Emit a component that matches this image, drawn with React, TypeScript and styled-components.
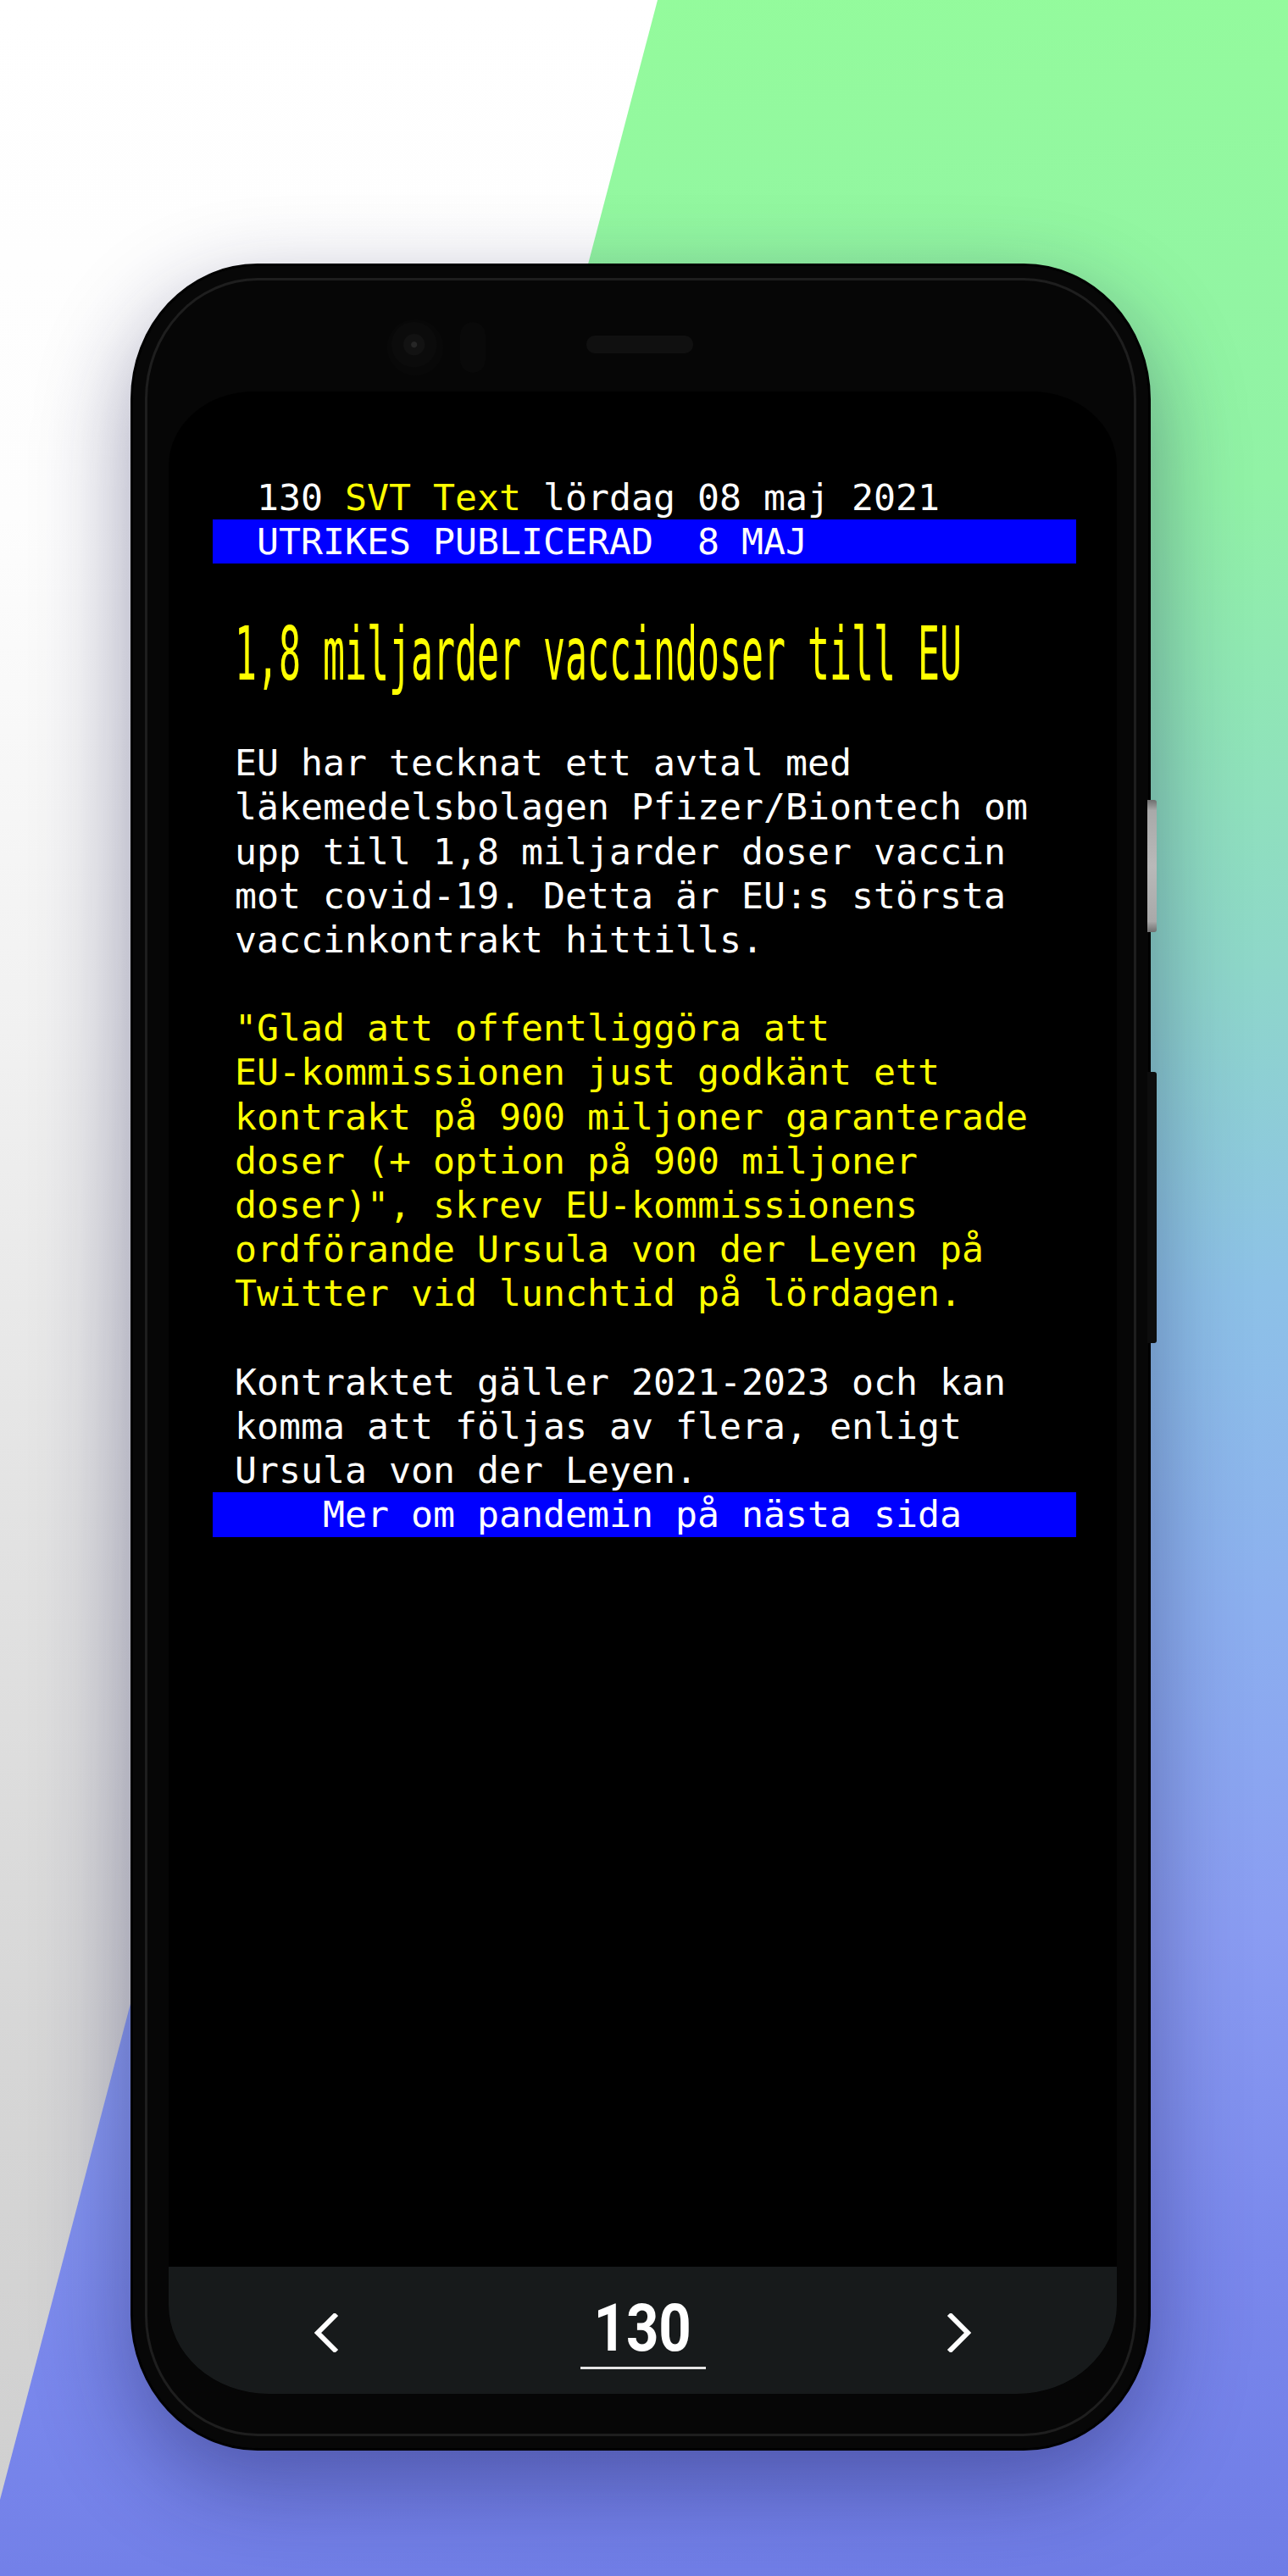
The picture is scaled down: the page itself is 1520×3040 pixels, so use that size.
import React from "react";
import styled, { createGlobalStyle } from "styled-components";

const GlobalStyle = createGlobalStyle`
  html, body {
    margin: 0;
    padding: 0;
  }
  body {
    width: 1520px;
    height: 3040px;
    overflow: hidden;
    background: #ffffff;
  }
`;

const Page = styled.div`
  position: relative;
  width: 1520px;
  height: 3040px;
  overflow: hidden;
  box-sizing: border-box;
  padding: 311px 0 0 154px;
  display: flex;
  align-items: flex-start;
  background: linear-gradient(
    175deg,
    #94fc9b 0%,
    #91f2a6 22%,
    #8ed7c9 40%,
    #8dc1e7 52%,
    #8cafef 64%,
    #8a9cf2 76%,
    #7a88ec 88%,
    #6f7ce6 100%
  );

  &::before {
    content: "";
    position: absolute;
    inset: 0;
    background: linear-gradient(
      180deg,
      #ffffff 0%,
      #fdfdfd 20%,
      #f1f1f1 40%,
      #e2e2e2 60%,
      #d6d6d6 80%,
      #cfcfcf 100%
    );
    clip-path: polygon(0 0, 776px 0, 0 2950px);
  }
`;

const Phone = styled.div`
  position: relative;
  z-index: 1;
  width: 1204px;
  height: 2581px;
  box-sizing: border-box;
  border: 3px solid #000;
  border-radius: 150px / 160px;
  background: #060606;
  box-shadow: inset 0 0 0 14px #070707, inset 0 0 0 17px #1e1e1e,
    0 40px 110px rgba(25, 25, 80, 0.42);
  display: flex;
  flex-direction: column;
  padding: 0 37px 64px 42px;
`;

const SideButton = styled.div<{ $top: number; $height: number; $light?: boolean }>`
  position: absolute;
  left: calc(100% - 1px);
  top: ${(p) => p.$top}px;
  width: 11px;
  height: ${(p) => p.$height}px;
  border-radius: 0 3px 3px 0;
  background: ${(p) =>
    p.$light
      ? "linear-gradient(180deg, #6e6e6e 0%, #a9a9a9 8%, #b9b9b9 50%, #a9a9a9 92%, #6e6e6e 100%)"
      : "#0d0d0d"};
`;

const TopBezel = styled.div`
  height: 148px;
  box-sizing: border-box;
  padding: 44px 0 0 258px;
  display: flex;
  align-items: center;
`;

const Camera = styled.div`
  width: 66px;
  height: 66px;
  border-radius: 50%;
  background: radial-gradient(
    circle at 48% 45%,
    #262626 0 3px,
    #121212 4px 12px,
    #0b0b0b 13px 26px,
    #080808 27px
  );
`;

const Sensor = styled.div`
  width: 30px;
  height: 60px;
  margin-left: 20px;
  border-radius: 15px;
  background: #090909;
`;

const Speaker = styled.div`
  width: 126px;
  height: 21px;
  margin-left: 119px;
  margin-bottom: 7px;
  border-radius: 10px;
  background: #101010;
`;

const Screen = styled.div`
  flex: 1;
  background: #000;
  border-radius: 100px 100px 118px 118px / 88px 88px 105px 105px;
  overflow: hidden;
  display: flex;
  flex-direction: column;
`;

const Teletext = styled.div`
  width: 1019px;
  margin: 99px 0 0 52px;
  font-family: "DejaVu Sans Mono", "Liberation Mono", monospace;
  font-size: 43.2px;
  line-height: 52.2px;
  color: #ffffff;
  white-space: pre;
`;

const Row = styled.div<{ $bar?: boolean; $yellow?: boolean }>`
  height: 52.2px;
  background: ${(p) => (p.$bar ? "#0000ff" : "transparent")};
  color: ${(p) => (p.$yellow ? "#ffff00" : "#ffffff")};
`;

const DoubleRow = styled.div`
  height: 104.4px;
  color: #ffff00;
`;

const DoubleText = styled.div`
  height: 52.2px;
  transform: translateY(2px) scaleY(2);
  transform-origin: 0 0;
`;

const Yellow = styled.span`
  color: #ffff00;
`;

const Spacer = styled.div`
  flex: 1;
`;

const NavBar = styled.nav`
  height: 150px;
  box-sizing: border-box;
  background: #171a1b;
  display: flex;
  align-items: center;
  justify-content: space-between;
  padding: 6px 171px 0;
`;

const PageNumber = styled.div`
  width: 148px;
  text-align: center;
  font-family: Roboto, "Liberation Sans", sans-serif;
  font-weight: 700;
  font-size: 78px;
  line-height: 76px;
  color: #ffffff;
  padding-bottom: 7px;
  border-bottom: 3px solid #e4e4e4;
`;

const Digits = styled.span`
  display: inline-block;
  transform: scaleX(0.86);
`;

const Chevron = ({ dir }: { dir: "left" | "right" }) => (
  <svg width="30" height="46" viewBox="0 0 30 46">
    <polyline
      points={dir === "left" ? "27,1 5,23 27,45" : "3,1 25,23 3,45"}
      fill="none"
      stroke="#ffffff"
      strokeWidth="6"
      strokeLinejoin="miter"
    />
  </svg>
);

const body1 = [
  " EU har tecknat ett avtal med",
  " läkemedelsbolagen Pfizer/Biontech om",
  " upp till 1,8 miljarder doser vaccin",
  " mot covid-19. Detta är EU:s största",
  " vaccinkontrakt hittills.",
];

const quote = [
  ' "Glad att offentliggöra att',
  " EU-kommissionen just godkänt ett",
  " kontrakt på 900 miljoner garanterade",
  " doser (+ option på 900 miljoner",
  ' doser)", skrev EU-kommissionens',
  " ordförande Ursula von der Leyen på",
  " Twitter vid lunchtid på lördagen.",
];

const body2 = [
  " Kontraktet gäller 2021-2023 och kan",
  " komma att följas av flera, enligt",
  " Ursula von der Leyen.",
];

export default function App() {
  return (
    <>
      <GlobalStyle />
      <Page>
        <Phone>
          <SideButton $top={630} $height={156} $light />
          <SideButton $top={951} $height={320} />
          <TopBezel>
            <Camera />
            <Sensor />
            <Speaker />
          </TopBezel>
          <Screen>
            <Teletext>
              <Row>
                {"  130 "}
                <Yellow>SVT Text</Yellow>
                {" lördag 08 maj 2021"}
              </Row>
              <Row $bar>{"  UTRIKES PUBLICERAD  8 MAJ"}</Row>
              <Row />
              <DoubleRow>
                <DoubleText>{" 1,8 miljarder vaccindoser till EU"}</DoubleText>
              </DoubleRow>
              <Row />
              {body1.map((t) => (
                <Row key={t}>{t}</Row>
              ))}
              <Row />
              {quote.map((t) => (
                <Row key={t} $yellow>
                  {t}
                </Row>
              ))}
              <Row />
              {body2.map((t) => (
                <Row key={t}>{t}</Row>
              ))}
              <Row $bar>{"     Mer om pandemin på nästa sida"}</Row>
            </Teletext>
            <Spacer />
            <NavBar>
              <Chevron dir="left" />
              <PageNumber>
                <Digits>130</Digits>
              </PageNumber>
              <Chevron dir="right" />
            </NavBar>
          </Screen>
        </Phone>
      </Page>
    </>
  );
}
